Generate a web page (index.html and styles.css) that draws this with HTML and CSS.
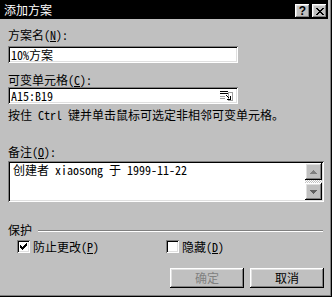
FILE: index.html
```html
<!DOCTYPE html>
<html lang="zh-CN">
<head>
<meta charset="utf-8">
<title>添加方案</title>
<link rel="stylesheet" href="styles.css">
</head>
<body>
<div class="window">
  <div class="titlebar">
    <span class="title">添加方案</span>
    <div class="tbtns">
      <span class="tbtn help">?</span>
      <span class="tbtn close">
        <svg width="8" height="7" viewBox="0 0 8 7" shape-rendering="crispEdges"><path d="M0 0h2v1h-2z M6 0h2v1h-2z M1 1h2v1h-2z M5 1h2v1h-2z M2 2h4v1h-4z M3 3h2v1h-2z M2 4h4v1h-4z M1 5h2v1h-2z M5 5h2v1h-2z M0 6h2v1h-2z M6 6h2v1h-2z" fill="#000"/></svg>
      </span>
    </div>
  </div>
  <div class="content">
    <div class="label lbl-name">方案名(<u>N</u>):</div>
    <div class="field field-name"><span>10%方案</span></div>
    <div class="label lbl-cells">可变单元格(<u>C</u>):</div>
    <div class="field field-cells">
      <span>A15:B19</span>
      <svg class="refedit" width="14" height="10" viewBox="0 0 14 10" shape-rendering="crispEdges">
        <rect x="0" y="0" width="8" height="1" fill="#000"/>
        <rect x="0" y="2" width="8" height="1" fill="#000"/>
        <rect x="0" y="5" width="5" height="1" fill="#a0a0a0"/>
        <rect x="0" y="7" width="5" height="1" fill="#a0a0a0"/>
        <rect x="8.5" y="1.5" width="4" height="8" fill="none" stroke="#a0a0a0"/>
        <path d="M6 4h1v1h1v1h1v1h-1v-1h-1v-1h-1z M7 8h3v-3h1v4h-4z" fill="#000"/>
      </svg>
    </div>
    <div class="label note">按住 Ctrl 键并单击鼠标可选定非相邻可变单元格。</div>
    <div class="label lbl-memo">备注(<u>O</u>):</div>
    <div class="memo">
      <div class="memo-text">创建者 xiaosong 于 1999-11-22</div>
      <div class="scroll">
        <span class="sbtn">
          <svg width="7" height="4" viewBox="0 0 7 4" shape-rendering="crispEdges"><path d="M3 0h1v1h1v1h1v1h1v1h-7v-1h1v-1h1v-1h1z" fill="#808080"/></svg>
        </span>
        <span class="track"></span>
        <span class="sbtn">
          <svg width="7" height="4" viewBox="0 0 7 4" shape-rendering="crispEdges"><path d="M0 0h7v1h-1v1h-1v1h-1v1h-1v-1h-1v-1h-1v-1h-1z" fill="#606060"/></svg>
        </span>
      </div>
    </div>
    <div class="group">
      <span class="group-title">保护</span>
      <span class="group-line"></span>
    </div>
    <div class="checks">
      <div class="chkitem first">
        <span class="chkbox">
          <svg width="7" height="7" viewBox="0 0 7 7" shape-rendering="crispEdges"><path d="M0 2h1v3h-1z M1 3h1v3h-1z M2 4h1v3h-1z M3 3h1v3h-1z M4 2h1v3h-1z M5 1h1v3h-1z M6 0h1v3h-1z" fill="#000"/></svg>
        </span>
        <span>防止更改(<u>P</u>)</span>
      </div>
      <div class="chkitem">
        <span class="chkbox"></span>
        <span>隐藏(<u>D</u>)</span>
      </div>
    </div>
    <div class="btns">
      <span class="btn disabled">确定</span>
      <span class="btn">取消</span>
    </div>
  </div>
</div>
</body>
</html>
```
FILE: styles.css
```css
* { box-sizing: border-box; }
html, body { margin: 0; padding: 0; }
body {
  width: 332px;
  height: 297px;
  overflow: hidden;
  background: #c0c0c0;
  color: #000;
  font-family: "Noto Sans Mono CJK SC", "Noto Sans CJK SC", monospace;
  font-size: 12px;
  line-height: 12px;
}
u { text-decoration: underline; text-underline-offset: 1px; }
.window {
  width: 332px;
  height: 297px;
  padding: 0 4px 4px 0;
  background: #c0c0c0;
  box-shadow: inset -1px -1px #000, inset -2px -2px #808080;
  display: flex;
  flex-direction: column;
}
.titlebar {
  height: 19px;
  background: #000;
  color: #fff;
  display: flex;
  align-items: flex-start;
  padding: 4px 1px 0 4px;
}
.title { flex: 1; }
.tbtns { display: flex; gap: 2px; }
.tbtn, .sbtn, .btn {
  background: #c0c0c0;
  box-shadow: inset -1px -1px #000, inset 1px 1px #fff, inset -2px -2px #808080, inset 2px 2px #dfdfdf;
  display: flex;
  align-items: center;
  justify-content: center;
}
.tbtn { width: 15px; height: 14px; color: #000; }
.help {
  font-family: "Liberation Sans", sans-serif;
  font-weight: bold;
  font-size: 12px;
  line-height: 12px;
  padding-bottom: 1px;
}
.close svg { margin-top: 0; }
.content {
  flex: 1;
  padding: 0 4px 0 8px;
  display: flex;
  flex-direction: column;
}
.lbl-name { margin-top: 10px; }
.field {
  width: 230px;
  height: 17px;
  background: #fff;
  box-shadow: inset 1px 1px #808080, inset -1px -1px #fff, inset 2px 2px #000, inset -2px -2px #dfdfdf;
  padding: 2px 4px 2px 3px;
  display: flex;
  align-items: center;
  justify-content: space-between;
}
.field-name { margin-top: 5px; }
.lbl-cells { margin-top: 11px; }
.field-cells { margin-top: 1px; }
.note { margin-top: 5px; }
.lbl-memo { margin-top: 25px; }
.memo {
  margin-top: 3px;
  height: 41px;
  background: #fff;
  box-shadow: inset 1px 1px #808080, inset -1px -1px #fff, inset 2px 2px #000, inset -2px -2px #dfdfdf;
  padding: 2px;
  display: flex;
}
.memo-text { flex: 1; padding: 1px 0 0 3px; }
.scroll { width: 17px; display: flex; flex-direction: column; }
.sbtn { height: 17px; }
.track {
  flex: 1;
  background: repeating-conic-gradient(#fff 0 25%, #c0c0c0 0 50%) 0 0 / 2px 2px;
}
.group { margin-top: 22px; display: flex; align-items: flex-start; }
.group-line {
  flex: 1;
  height: 2px;
  margin: 6px 1px 0 6px;
  border-top: 1px solid #808080;
  border-bottom: 1px solid #fff;
}
.checks { margin-top: 4px; padding-left: 9px; display: flex; }
.chkitem { display: flex; align-items: center; gap: 3px; }
.chkitem.first { width: 149px; }
.chkbox {
  width: 13px;
  height: 13px;
  background: #fff;
  box-shadow: inset 1px 1px #808080, inset -1px -1px #fff, inset 2px 2px #000, inset -2px -2px #dfdfdf;
  display: flex;
  align-items: center;
  justify-content: center;
}
.btns { margin-top: 15px; display: flex; justify-content: flex-end; gap: 6px; }
.btn { width: 74px; height: 20px; }
.btn.disabled { color: #808080; }
```
